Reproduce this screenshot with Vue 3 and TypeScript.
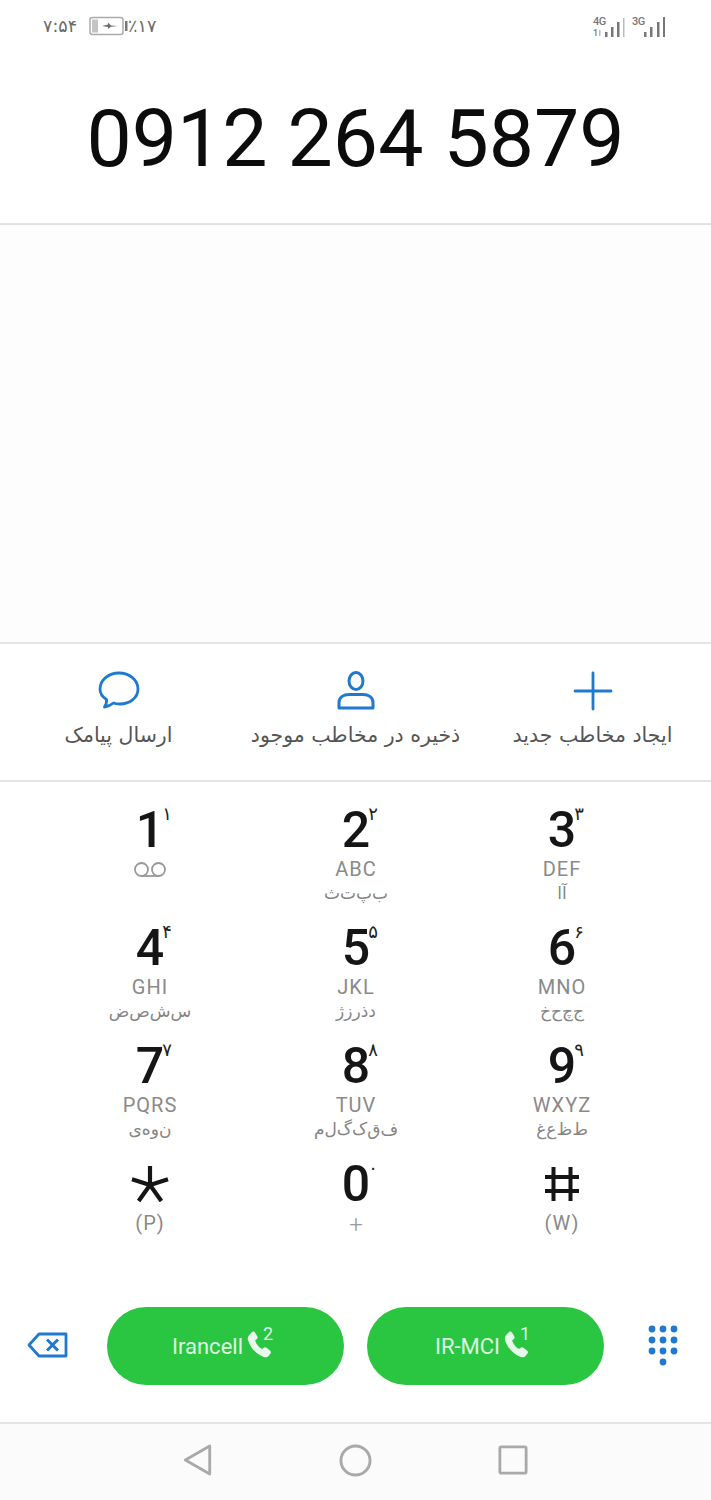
<script setup lang="ts">
interface Key { d: string; sup: string; en?: string; fa?: string[]; vm?: boolean; glyph?: string }
const keys: Key[] = [
  { d: '1', sup: '۱', vm: true },
  { d: '2', sup: '۲', en: 'ABC', fa: ['ب', 'پ', 'ت', 'ث'] },
  { d: '3', sup: '۳', en: 'DEF', fa: ['آ', 'ا'] },
  { d: '4', sup: '۴', en: 'GHI', fa: ['س', 'ش', 'ص', 'ض'] },
  { d: '5', sup: '۵', en: 'JKL', fa: ['د', 'ذ', 'ر', 'ز', 'ژ'] },
  { d: '6', sup: '۶', en: 'MNO', fa: ['ج', 'چ', 'ح', 'خ'] },
  { d: '7', sup: '۷', en: 'PQRS', fa: ['ن', 'و', 'ه', 'ی'] },
  { d: '8', sup: '۸', en: 'TUV', fa: ['ف', 'ق', 'ک', 'گ', 'ل', 'م'] },
  { d: '9', sup: '۹', en: 'WXYZ', fa: ['ط', 'ظ', 'ع', 'غ'] },
  { d: '', sup: '', en: '(P)', glyph: 'star' },
  { d: '0', sup: '۰', en: '+' },
  { d: '', sup: '', en: '(W)', glyph: 'hash' },
]
const joinFa = (f?: string[]) => (f ? f.join('\u200c') : '')
const dots = [
  [4, 4], [15, 4], [26, 4],
  [4, 15], [15, 15], [26, 15],
  [4, 26], [15, 26], [26, 26],
  [15, 37],
]
const phone = 'M6.6 1.6 C7.4 1.1 8.3 1.3 8.8 2.1 L10.9 5.6 C11.4 6.4 11.2 7.3 10.5 7.9 L9 9.1 C9.7 11.9 12.1 14.9 14.9 16.4 L16.4 15.2 C17.1 14.6 18 14.6 18.7 15.2 L21.9 17.9 C22.6 18.5 22.7 19.5 22.1 20.2 L20.6 22 C19.6 23.2 18 23.7 16.4 23.1 C9.9 20.8 4.7 15 2.9 8.4 C2.5 6.8 3 5.2 4.2 4.1 Z'
</script>

<template>
  <div class="screen">
    <header class="status">
      <div class="status-left">
        <span class="time">۷:۵۴</span>
        <svg class="battery" width="39" height="20" viewBox="0 0 39 20">
          <rect x="1" y="1.500" width="33" height="17" rx="2.500" fill="#fff" stroke="#aaa" stroke-width="1.500" />
          <rect x="3" y="3.500" width="6" height="13" fill="#c4c4c4" />
          <path d="M13 10 L19 8.500 L19 6.500 L22 9.500 L29 10 L22 10.700 L19 13 L19 11 Z" fill="#6d6d6d" />
          <rect x="36" y="5" width="2.500" height="10" fill="#777" />
        </svg>
        <span class="pct">٪۱۷</span>
      </div>
      <div class="status-right">
        <svg width="34" height="24" viewBox="0 0 34 24">
          <text x="1" y="11" class="net">4G</text>
          <text x="1" y="22" class="net net-sm">1</text>
          <rect x="7" y="16" width="1.500" height="6" fill="#bbb" />
          <g fill="#777">
            <rect x="13" y="18" width="2.500" height="5" />
            <rect x="19" y="13" width="2.500" height="10" />
            <rect x="25" y="8" width="2.500" height="15" />
          </g>
          <rect x="31" y="4" width="1.500" height="19" fill="#bbb" />
        </svg>
        <svg width="33" height="24" viewBox="0 0 33 24">
          <text x="0" y="11" class="net">3G</text>
          <g fill="#777">
            <rect x="12" y="18" width="2.500" height="5" />
            <rect x="18" y="13" width="2.500" height="10" />
            <rect x="25" y="8" width="2.500" height="15" />
            <rect x="31" y="3" width="2" height="20" />
          </g>
        </svg>
      </div>
    </header>

    <section class="number">0912 264 5879</section>
    <section class="results"></section>

    <section class="actions">
      <div class="action">
        <svg width="44" height="42" viewBox="0 0 44 42" fill="none" stroke="#2079cf" stroke-width="2.800">
          <path d="M22 3 C32.500 3 41 10 41 19 C41 28 32.500 34 23 34 C20.500 34 18 33.700 16.500 33 C13.500 35.500 10.500 36.500 7.500 37 C9 34.500 10 32 9.500 29.500 C5.500 27 3 23.500 3 19 C3 10 11.500 3 22 3 Z" stroke-linejoin="round" />
        </svg>
        <span class="label">ارسال پیامک</span>
      </div>
      <div class="action">
        <svg width="44" height="42" viewBox="0 0 44 42" fill="none" stroke="#2079cf" stroke-width="3">
          <ellipse cx="22" cy="11" rx="7" ry="8.500" />
          <path d="M5 38 L5 33 C5 27 10 24.500 15 24.500 L29 24.500 C34 24.500 39 27 39 33 L39 38 Z" stroke-linejoin="round" />
        </svg>
        <span class="label">ذخیره در مخاطب موجود</span>
      </div>
      <div class="action">
        <svg width="44" height="42" viewBox="0 0 44 42" fill="none" stroke="#2079cf" stroke-width="2.800">
          <path d="M22 3 V39 M4 21 H40" stroke-linecap="round" />
        </svg>
        <span class="label">ایجاد مخاطب جدید</span>
      </div>
    </section>

    <section class="pad">
      <div v-for="(k, i) in keys" :key="i" class="key">
        <div class="digit-row">
          <span v-if="k.d" class="digit">{{ k.d }}<span class="sup">{{ k.sup }}</span></span>
          <svg v-else-if="k.glyph === 'star'" width="38" height="36" viewBox="0 0 40 38" fill="none" stroke="#151515" stroke-width="4.400">
            <path d="M20 0 V20 M1 14 L20 20 L39 14 M20 20 L8 37 M20 20 L32 37" />
          </svg>
          <svg v-else width="36" height="36" viewBox="0 0 36 36" fill="none" stroke="#151515" stroke-width="4">
            <path d="M9.500 1 V35 M26.500 1 V35 M1 11 H35 M1 25 H35" />
          </svg>
        </div>
        <svg v-if="k.vm" class="vm" width="34" height="16" viewBox="0 0 34 16" fill="none" stroke="#999" stroke-width="1.800">
          <circle cx="8.500" cy="7.500" r="6.500" />
          <circle cx="25.500" cy="7.500" r="6.500" />
          <path d="M8.500 14 H25.500" />
        </svg>
        <div v-else class="en" :class="{ plus: k.en === '+' }">{{ k.en }}</div>
        <div v-if="k.fa" class="fa" dir="rtl">{{ joinFa(k.fa) }}</div>
      </div>
    </section>

    <section class="call-bar">
      <svg class="side" width="42" height="28" viewBox="0 0 42 28" fill="none" stroke="#2079cf" stroke-width="2.800">
        <path d="M12 3 H39 V25 H12 L2 14 Z" stroke-linejoin="round" />
        <path d="M20 8.500 L31 19.500 M31 8.500 L20 19.500" stroke-width="3" />
      </svg>
      <button class="call">
        <span>Irancell</span>
        <span class="ph">
          <svg width="27" height="27" viewBox="2.500 1 20.500 23"><path :d="phone" fill="#e7f9ea" /></svg>
          <span class="sim">2</span>
        </span>
      </button>
      <button class="call">
        <span>IR-MCI</span>
        <span class="ph">
          <svg width="27" height="27" viewBox="2.500 1 20.500 23"><path :d="phone" fill="#e7f9ea" /></svg>
          <span class="sim">1</span>
        </span>
      </button>
      <svg class="side" width="30" height="41" viewBox="0 0 30 41" fill="#2079cf">
        <circle v-for="(p, i) in dots" :key="i" :cx="p[0]" :cy="p[1]" r="3.400" />
      </svg>
    </section>

    <nav class="nav">
      <svg width="30" height="34" viewBox="0 0 32 34" fill="none" stroke="#a9a9a9" stroke-width="3" stroke-linejoin="round">
        <path d="M28.500 2 V32 L2.500 17 Z" />
      </svg>
      <svg width="33" height="33" viewBox="0 0 34 34" fill="none" stroke="#a9a9a9" stroke-width="3">
        <circle cx="17" cy="17" r="15" />
      </svg>
      <svg width="30" height="30" viewBox="0 0 32 32" fill="none" stroke="#a9a9a9" stroke-width="3" stroke-linejoin="round">
        <rect x="2" y="2" width="28" height="28" rx="1.500" />
      </svg>
    </nav>
  </div>
</template>

<style>
html, body { margin: 0; background: #fff; }
</style>

<style scoped>
.screen {
  width: 711px;
  height: 1500px;
  display: flex;
  flex-direction: column;
  background: #fff;
  font-family: Roboto, "DejaVu Sans", sans-serif;
  overflow: hidden;
}
.status {
  height: 52px;
  flex: none;
  display: flex;
  justify-content: space-between;
  align-items: flex-start;
  padding: 14px 46px 0 43px;
  box-sizing: border-box;
  background: #fff;
}
.status-left { display: flex; align-items: center; gap: 12px; color: #6b6b6b; font: 17.500px/24px "DejaVu Sans", sans-serif; }
.battery { margin-right: -12px; }
.pct { letter-spacing: -1.500px; }
.status-right { display: flex; gap: 6px; }
.net { font: 500 11px Roboto, sans-serif; letter-spacing: -0.500px; fill: #777; }
.net-sm { font-size: 9px; }
.number {
  height: 173px;
  flex: none;
  box-sizing: border-box;
  border-bottom: 2px solid #e2e2e2;
  padding-top: 40px;
  text-align: center;
  font-size: 80.600px;
  line-height: 94px;
  color: #0c0c0c;
}
.results { height: 417px; flex: none; background: #fdfdfd; }
.actions {
  height: 140px;
  flex: none;
  box-sizing: border-box;
  border-top: 2px solid #e4e4e4;
  border-bottom: 2px solid #e4e4e4;
  display: grid;
  grid-template-columns: 237px 237px 237px;
  background: #fff;
}
.action { display: flex; flex-direction: column; align-items: center; padding-top: 26px; gap: 8px; }
.label {
  font: 20.500px/30px "DejaVu Sans", sans-serif;
  color: #555;
  white-space: nowrap;
}
.pad {
  flex: none;
  height: 520px;
  box-sizing: border-box;
  padding: 21px 47px 0;
  display: grid;
  grid-template-columns: repeat(3, 206px);
  grid-auto-rows: 118px;
  background: #fff;
}
.key { display: flex; flex-direction: column; align-items: center; }
.digit-row { height: 54px; display: flex; align-items: center; justify-content: center; }
.digit { position: relative; font-size: 50px; font-weight: 500; line-height: 54px; color: #151515; }
.sup {
  position: absolute;
  left: 100%;
  top: 1px;
  margin-left: -2px;
  font: 400 18px/20px "DejaVu Sans", sans-serif;
  color: #222;
}
.en { font-size: 20px; line-height: 24px; letter-spacing: 1px; color: #8a8a8a; }
.en.plus { font-size: 24px; font-weight: 300; line-height: 28px; letter-spacing: 0; color: #999; }
.vm { margin-top: 5px; }
.fa { font: 17px/24px "DejaVu Sans", sans-serif; color: #858585; white-space: nowrap; }
.call-bar {
  flex: none;
  height: 120px;
  display: flex;
  align-items: flex-start;
  padding: 5px 27px 0;
  gap: 23px;
  box-sizing: border-box;
  background: #fff;
}
.side { flex: none; align-self: flex-start; }
.side:first-child { margin-top: 24px; margin-right: 15px; }
.side:last-child { margin-left: 21px; margin-top: 18px; }
.call {
  flex: none;
  width: 237px;
  height: 78px;
  border: none;
  border-radius: 39px;
  background: #2ac642;
  color: #dff7e3;
  font-family: Roboto, sans-serif;
  font-size: 22px;
  display: flex;
  align-items: center;
  justify-content: center;
  gap: 3px;
  padding: 0;
}
.ph { position: relative; display: flex; top: -2px; margin-right: 6px; }
.sim { position: absolute; left: 17px; top: -7px; font-size: 18px; line-height: 20px; }
.nav {
  flex: none;
  height: 78px;
  box-sizing: border-box;
  border-top: 2px solid #e4e4e4;
  padding-bottom: 4px;
  background: #fbfbfb;
  display: grid;
  grid-template-columns: 156px 159px 80px;
  padding-left: 183px;
  align-items: center;
  justify-items: start;
}
</style>
